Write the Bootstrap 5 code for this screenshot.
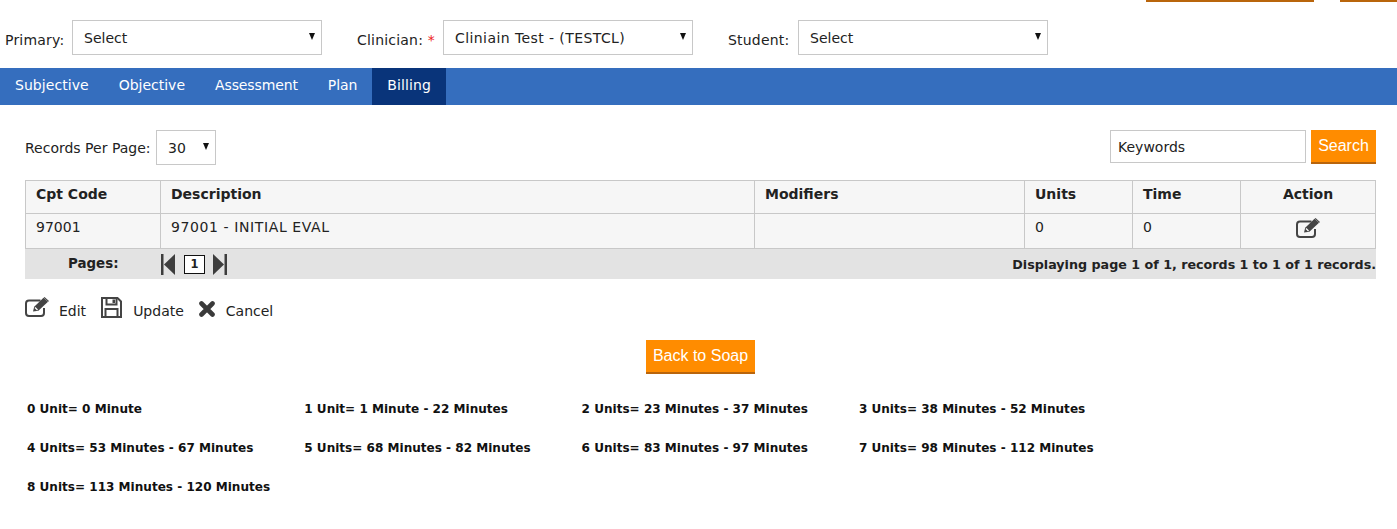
<!DOCTYPE html>
<html lang="en">
<head>
<meta charset="utf-8">
<title>Billing</title>
<link href="https://cdn.jsdelivr.net/npm/bootstrap@5.3.0/dist/css/bootstrap.min.css" rel="stylesheet">
<style>
body{font-family:"DejaVu Sans",sans-serif;font-size:14px;color:#222;background:#fff;}
.top-strip{height:2px;gap:26px;}
.top-strip span{background:#b9650c;height:2px;display:block;}
.top-strip .s1{width:168px;}
.top-strip .s2{width:57px;}
.filter-row{padding:18px 0 13px 5px;height:66px;}
.filter-label{margin-top:10px;white-space:nowrap;line-height:20px;letter-spacing:.2px;}
.fl-primary{width:67px;}
.fl-clin{width:86px;margin-left:35px;}
.fl-stud{width:70px;margin-left:35px;}
.req{color:#e22;}
.sel{height:35px;border:1px solid #c8c8c8;border-radius:0;font-size:14px;color:#222;padding:1px 11px 0;line-height:33px;
  background-image:url("data:image/svg+xml,%3Csvg xmlns='http://www.w3.org/2000/svg' width='6' height='7'%3E%3Cpath d='M0 0h6L3 7z' fill='%23111'/%3E%3C/svg%3E");
  background-size:6px 7px;background-position:right 6px top 12px;}
.sel-wide{letter-spacing:.42px;}
.w-250{width:250px;}
.tabs{background:#356ebe;height:37px;}
.tabs a{color:#fff;text-decoration:none;font-size:14px;padding:0 15px;line-height:35px;height:37px;display:block;}
.tabs a.on{background:#09347a;}
.tabs a.t1{letter-spacing:.05px;}
.tabs a.t3{letter-spacing:-.12px;}
.tabs a.t4{letter-spacing:-.1px;}
.tabs a.t5{letter-spacing:.15px;}
.tools{padding:25px 21px 0 25px;height:75px;}
.rec-label{margin-top:8px;width:131px;white-space:nowrap;}
.w-60{width:60px;}
.kw{width:196px;height:33px;border:1px solid #c8c8c8;border-radius:0;font-size:14px;color:#222;padding:0 7px;}
.orange{background:#ff8c00;color:#fff;border:0;border-bottom:2px solid #b9650c;border-radius:0;font-family:"Liberation Sans",sans-serif;font-size:16px;}
.orange:hover{background:#ff8c00;color:#fff;}
.srch{width:65px;height:34px;padding:0 0 1px;}
.back{width:109px;height:34px;padding:0 0 1px;}
.grid-wrap{padding:0 21px 0 25px;}
.bgrid{table-layout:fixed;width:1351px;border-collapse:collapse;margin:0;}
.bgrid th,.bgrid td{border:1px solid #c8c8c8;background:#f6f6f6;padding:0 10px;color:#222;box-shadow:none;}
.bgrid th{height:33px;font-weight:700;vertical-align:middle;padding-bottom:6px;}
.bgrid td{height:35px;padding-top:4px;line-height:18px;}
.bgrid td.desc{letter-spacing:.6px;}
.bgrid td.ed-cell{text-align:center;padding:4px 0 0;}
.pager{background:#e3e3e3;height:30px;font-weight:700;font-size:12.7px;padding-top:1px;}
.pg-label{width:135px;padding-left:43px;font-size:13.400px;}
.pg-one{width:21px;height:19px;border:1px solid #111;background:#fff;font-size:11.500px;line-height:17px;text-align:center;margin:0 8px 0 9px;}
.act-row{padding:18px 0 0 25px;height:61px;}
.act-item{margin-right:15px;}
.act-item span{margin-top:4px;}
.act-item .a-edit{margin-left:9px;}
.act-item .a-upd{margin-left:11px;}
.act-item .a-can{margin-left:10px;}
.act-item.upd-item{margin-right:14px;}
.x-ico{margin-top:4px;}
.back-row{height:34px;padding-left:4px;}
.units{padding:0 0 0 27px;margin-top:16px;}
.unit-line{height:39px;}
.unit-cell{width:277.300px;font-weight:700;font-size:12.050px;line-height:39px;white-space:nowrap;color:#111;}
</style>
</head>
<body>
<div class="top-strip d-flex justify-content-end"><span class="s1"></span><span class="s2"></span></div>
<div class="filter-row d-flex">
  <label class="filter-label fl-primary">Primary:</label>
  <select class="form-select sel w-250"><option>Select</option></select>
  <label class="filter-label fl-clin">Clinician: <span class="req">*</span></label>
  <select class="form-select sel sel-wide w-250"><option>Cliniain Test - (TESTCL)</option></select>
  <label class="filter-label fl-stud">Student:</label>
  <select class="form-select sel w-250"><option>Select</option></select>
</div>
<nav class="tabs d-flex">
  <a href="#" class="t1">Subjective</a><a href="#" class="t2">Objective</a><a href="#" class="t3">Assessment</a><a href="#" class="t4">Plan</a><a href="#" class="t5 on">Billing</a>
</nav>
<div class="tools d-flex justify-content-between">
  <div class="d-flex align-items-start">
    <label class="rec-label">Records Per Page:</label>
    <select class="form-select sel w-60"><option>30</option></select>
  </div>
  <div class="d-flex align-items-start" style="gap:5px">
    <input class="form-control kw" value="Keywords" aria-label="Keywords">
    <button class="btn orange srch" type="button">Search</button>
  </div>
</div>
<div class="grid-wrap">
  <table class="table bgrid">
    <colgroup><col style="width:135px"><col style="width:594px"><col style="width:270px"><col style="width:108px"><col style="width:108px"><col style="width:135px"></colgroup>
    <thead><tr><th>Cpt Code</th><th>Description</th><th>Modifiers</th><th>Units</th><th>Time</th><th class="text-center">Action</th></tr></thead>
    <tbody><tr><td>97001</td><td class="desc">97001 - INITIAL EVAL</td><td></td><td>0</td><td>0</td>
      <td class="ed-cell"><svg width="25" height="20" viewBox="0 0 25 20" aria-label="Edit"><path d="M15.500 3.500H4A3 3 0 0 0 1 6.500v9.500a3 3 0 0 0 3 3h12a3 3 0 0 0 3-3v-5" fill="none" stroke="#444" stroke-width="2"/><path d="M8 14.500l1.200-4.700L18.500.8l4.500 4-9.600 9z" fill="#444"/><path d="M19.500 0l4.500 4-.8.7-4.500-4z" fill="#444"/><path d="M10 10.500l2.500 2.500" stroke="#fff" stroke-width="1.200"/></svg></td></tr></tbody>
  </table>
  <div class="pager d-flex align-items-center justify-content-between">
    <div class="d-flex align-items-center">
      <div class="pg-label">Pages:</div>
      <svg width="15" height="21" viewBox="0 0 15 21" aria-label="First"><path d="M1 0h2.500v21H1z" fill="#3d3d3d"/><path d="M15 0v21L4 10.500z" fill="#3d3d3d"/></svg>
      <div class="pg-one">1</div>
      <svg width="15" height="21" viewBox="0 0 15 21" aria-label="Last"><path d="M11.500 0H14v21h-2.500z" fill="#3d3d3d"/><path d="M0 0v21l11-10.500z" fill="#3d3d3d"/></svg>
    </div>
    <div>Displaying page 1 of 1, records 1 to 1 of 1 records.</div>
  </div>
</div>
<div class="act-row d-flex align-items-start">
  <div class="act-item d-flex align-items-start"><svg width="25" height="20" viewBox="0 0 25 20" aria-label="Edit"><path d="M15.500 3.500H4A3 3 0 0 0 1 6.500v9.500a3 3 0 0 0 3 3h12a3 3 0 0 0 3-3v-5" fill="none" stroke="#444" stroke-width="2"/><path d="M8 14.500l1.200-4.700L18.500.8l4.500 4-9.600 9z" fill="#444"/><path d="M19.500 0l4.500 4-.8.7-4.500-4z" fill="#444"/><path d="M10 10.500l2.500 2.500" stroke="#fff" stroke-width="1.200"/></svg><span class="a-edit">Edit</span></div>
  <div class="act-item upd-item d-flex align-items-start"><svg width="21" height="21" viewBox="0 0 21 21" aria-label="Update"><path d="M1 1h15.500L20 4.500V20H1z" fill="none" stroke="#444" stroke-width="2"/><path d="M5.500 1v6.500h10V1" fill="none" stroke="#444" stroke-width="2"/><path d="M11.500 2.500h2.500v3.500h-2.500z" fill="#444"/><path d="M4.500 20v-8h12v8" fill="none" stroke="#444" stroke-width="2"/></svg><span class="a-upd">Update</span></div>
  <div class="act-item d-flex align-items-start"><svg class="x-ico" width="18" height="16" viewBox="0 0 18 16" aria-label="Cancel"><path d="M3.500 2.500l11 11M14.500 2.500l-11 11" stroke="#3a3a3a" stroke-width="4.600" stroke-linecap="round"/></svg><span class="a-can">Cancel</span></div>
</div>
<div class="back-row d-flex justify-content-center"><button class="btn orange back" type="button">Back to Soap</button></div>
<div class="units">
  <div class="unit-line d-flex"><div class="unit-cell">0 Unit= 0 Minute</div><div class="unit-cell">1 Unit= 1 Minute - 22 Minutes</div><div class="unit-cell">2 Units= 23 Minutes - 37 Minutes</div><div class="unit-cell">3 Units= 38 Minutes - 52 Minutes</div></div>
  <div class="unit-line d-flex"><div class="unit-cell">4 Units= 53 Minutes - 67 Minutes</div><div class="unit-cell">5 Units= 68 Minutes - 82 Minutes</div><div class="unit-cell">6 Units= 83 Minutes - 97 Minutes</div><div class="unit-cell">7 Units= 98 Minutes - 112 Minutes</div></div>
  <div class="unit-line d-flex"><div class="unit-cell">8 Units= 113 Minutes - 120 Minutes</div></div>
</div>
<script src="https://cdn.jsdelivr.net/npm/bootstrap@5.3.0/dist/js/bootstrap.bundle.min.js"></script>
</body>
</html>
